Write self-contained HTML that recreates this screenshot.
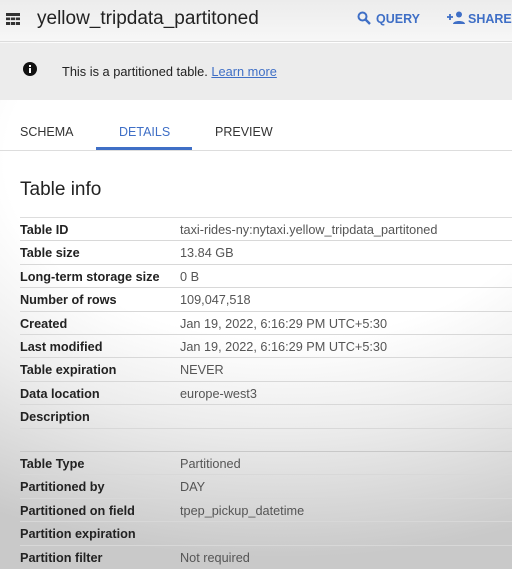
<!DOCTYPE html>
<html><head><style>
*{margin:0;padding:0;box-sizing:border-box}
body{width:512px;height:569px;overflow:hidden;font-family:"Liberation Sans",sans-serif;position:relative;
background:radial-gradient(ellipse 120% 70% at 55% 28%,#ffffff 45%,#ececec 68%,#c9c9c9 100%);}
.hdr{position:absolute;left:0;top:0;width:512px;height:42px;background:linear-gradient(#ececec,#f7f7f7);border-bottom:1px solid #dcdcdc}
.hdr .t{position:absolute;left:37px;top:8px;font-size:19px;color:#222}
.btn{position:absolute;top:12px;font-size:12.5px;color:#3f6fc6;font-weight:bold}
.ban{position:absolute;left:0;top:43px;width:512px;height:57px;background:#ececec}
.ban .m{position:absolute;left:62px;top:21px;font-size:12.8px;color:#222}
.ban a{color:#3f6fc6;text-decoration:underline}
.tabs{position:absolute;left:0;top:100px;width:512px;height:51px;border-bottom:1px solid #ddd}
.tab{position:absolute;top:25px;font-size:12.5px;color:#333}
.ul{position:absolute;left:96px;top:47px;width:96px;height:3px;background:#3f6fc6}
h2{position:absolute;left:20px;top:179px;font-size:19px;font-weight:normal;color:#222}
.row{position:absolute;left:20px;width:492px;height:23.4px;border-bottom:1px solid #d8d8d8;font-size:12.7px}
.row b{position:absolute;left:0;top:5px;color:#222;font-weight:bold}
.row span{position:absolute;left:160px;top:5px;color:#555}
</style></head><body>
<div class="hdr">
<svg style="position:absolute;left:6px;top:13px" width="14" height="12" viewBox="0 0 14 12"><rect x="0" y="0" width="14" height="3" fill="#333"/><rect x="0" y="4.5" width="14" height="3" fill="#333"/><rect x="0" y="9" width="14" height="3" fill="#333"/><path d="M4.5 4.5v7.5M9.5 4.5v7.5M0 7.5h14" stroke="#eee" stroke-width="0.8"/></svg>
<div class="t">yellow_tripdata_partitoned</div>
<svg style="position:absolute;left:357px;top:11px" width="14" height="14" viewBox="0 0 14 14"><circle cx="5.5" cy="5.5" r="4" fill="none" stroke="#3f6fc6" stroke-width="2"/><path d="M8.5 8.5l4.5 4.5" stroke="#3f6fc6" stroke-width="2.4"/></svg>
<div class="btn" style="left:376px">QUERY</div>
<svg style="position:absolute;left:447px;top:11px" width="18" height="13" viewBox="0 0 18 13"><path d="M3 3v6M0 6h6" stroke="#3f6fc6" stroke-width="1.8"/><circle cx="12" cy="3.5" r="3" fill="#3f6fc6"/><path d="M6 13c0-4 12-4 12 0z" fill="#3f6fc6"/></svg>
<div class="btn" style="left:468px">SHARE</div>
</div>
<div class="ban">
<svg style="position:absolute;left:23px;top:19px" width="14" height="14" viewBox="0 0 14 14"><circle cx="7" cy="7" r="7" fill="#111"/><rect x="6" y="6" width="2" height="5" fill="#fff"/><rect x="6" y="3" width="2" height="2" fill="#fff"/></svg>
<div class="m">This is a partitioned table. <a>Learn more</a></div>
</div>
<div class="tabs">
<div class="tab" style="left:20px">SCHEMA</div>
<div class="tab" style="left:119px;color:#3f6fc6">DETAILS</div>
<div class="tab" style="left:215px">PREVIEW</div>
<div class="ul"></div>
</div>
<h2>Table info</h2>
<div style="position:absolute;left:20px;top:217px;width:492px;border-top:1px solid #ddd"></div>
<div class="row" style="top:218px"><b>Table ID</b><span>taxi-rides-ny:nytaxi.yellow_tripdata_partitoned</span></div>
<div class="row" style="top:241.4px"><b>Table size</b><span>13.84 GB</span></div>
<div class="row" style="top:264.8px"><b>Long-term storage size</b><span>0 B</span></div>
<div class="row" style="top:288.2px"><b>Number of rows</b><span>109,047,518</span></div>
<div class="row" style="top:311.6px"><b>Created</b><span>Jan 19, 2022, 6:16:29 PM UTC+5:30</span></div>
<div class="row" style="top:335px"><b>Last modified</b><span>Jan 19, 2022, 6:16:29 PM UTC+5:30</span></div>
<div class="row" style="top:358.4px"><b>Table expiration</b><span>NEVER</span></div>
<div class="row" style="top:381.8px"><b>Data location</b><span>europe-west3</span></div>
<div class="row" style="top:405.2px"><b>Description</b><span></span></div>
<div style="position:absolute;left:20px;top:451px;width:492px;border-top:1px solid #c8c8c8"></div>
<div class="row" style="top:452px"><b>Table Type</b><span>Partitioned</span></div>
<div class="row" style="top:475.4px"><b>Partitioned by</b><span>DAY</span></div>
<div class="row" style="top:498.8px"><b>Partitioned on field</b><span>tpep_pickup_datetime</span></div>
<div class="row" style="top:522.2px"><b>Partition expiration</b><span></span></div>
<div class="row" style="top:545.6px;border:0"><b>Partition filter</b><span>Not required</span></div>
</body></html>
